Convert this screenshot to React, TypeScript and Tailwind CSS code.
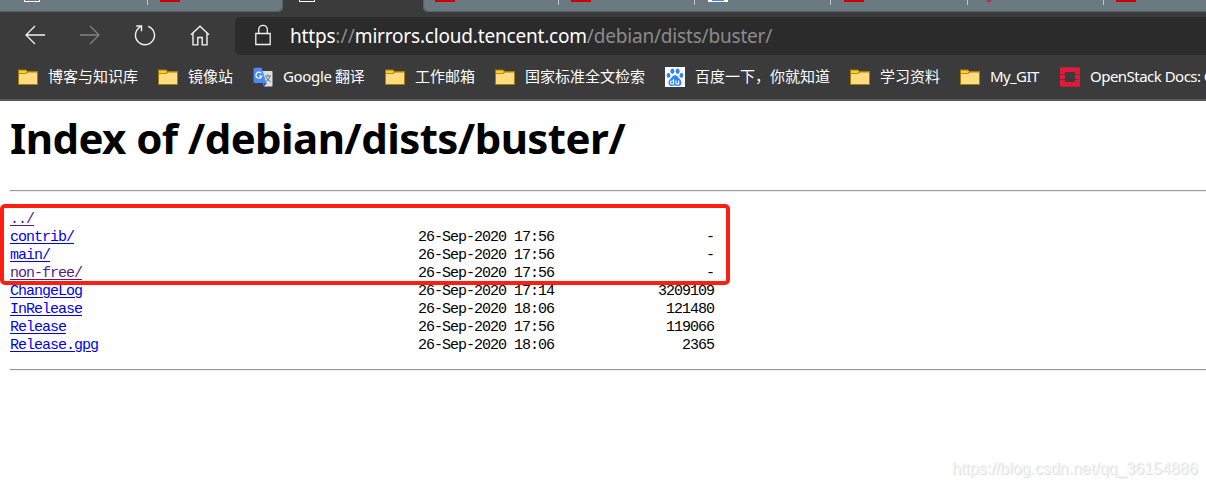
import type { ReactNode } from "react";
import clsx from "clsx";

type IconKind = "folder" | "translate" | "baidu" | "openstack";

interface Bookmark {
  label: string;
  icon: IconKind;
  width: string;
  tracking?: string;
}

interface Entry {
  name: string;
  date?: string;
  size?: string;
  visited?: boolean;
}

const BOOKMARKS: Bookmark[] = [
  { label: "博客与知识库", icon: "folder", width: "w-[140px]" },
  { label: "镜像站", icon: "folder", width: "w-[95px]" },
  { label: "Google 翻译", icon: "translate", width: "w-[132px]", tracking: "tracking-[-0.35px]" },
  { label: "工作邮箱", icon: "folder", width: "w-[110px]" },
  { label: "国家标准全文检索", icon: "folder", width: "w-[170px]" },
  { label: "百度一下，你就知道", icon: "baidu", width: "w-[185px]" },
  { label: "学习资料", icon: "folder", width: "w-[110px]" },
  { label: "My_GIT", icon: "folder", width: "w-[100px]", tracking: "tracking-[-0.6px]" },
  { label: "OpenStack Docs: G", icon: "openstack", width: "w-[180px]", tracking: "tracking-[-0.52px]" },
];

const ENTRIES: Entry[] = [
  { name: "../", visited: true },
  { name: "contrib/", date: "26-Sep-2020 17:56", size: "-" },
  { name: "main/", date: "26-Sep-2020 17:56", size: "-" },
  { name: "non-free/", date: "26-Sep-2020 17:56", size: "-", visited: true },
  { name: "ChangeLog", date: "26-Sep-2020 17:14", size: "3209109" },
  { name: "InRelease", date: "26-Sep-2020 18:06", size: "121480" },
  { name: "Release", date: "26-Sep-2020 17:56", size: "119066" },
  { name: "Release.gpg", date: "26-Sep-2020 18:06", size: "2365" },
];

export default function App() {
  return (
    <div className="relative flex h-[488px] w-[1206px] flex-col overflow-hidden bg-white">
      <TabStrip />
      <Toolbar />
      <BookmarkBar />
      <DirectoryListing />
      <div className="absolute top-[459px] left-[952px] font-['Liberation_Sans',sans-serif] text-[16px] leading-5 whitespace-nowrap text-[#f4f4f4] [text-shadow:1px_1px_0_#e0e0e0]">
        https://blog.csdn.net/qq_36154886
      </div>
    </div>
  );
}

function TabStrip() {
  return (
    <div className="flex h-3 shrink-0 bg-[#3b3b3b]">
      <div className="flex w-[283px] rounded-br-[5px] bg-[#6b7a80] shadow-[inset_-1px_-1px_1px_#536168]">
        <Tab width="w-[148px]" pad="pl-6" divider>
          <PageFavicon />
        </Tab>
        <Tab width="w-[135px]" pad="pl-3">
          <RedFavicon />
        </Tab>
      </div>
      <Tab width="w-[140px]" pad="pl-4">
        <PageFavicon />
      </Tab>
      <div className="flex flex-1 overflow-hidden rounded-bl-[5px] bg-[#6b7a80] shadow-[inset_1px_-1px_1px_#536168]">
        <Tab width="w-[136px]" pad="pl-3" divider>
          <RedFavicon />
        </Tab>
        <Tab width="w-[136px]" pad="pl-3" divider>
          <RedFavicon />
        </Tab>
        <Tab width="w-[136px]" pad="pl-[13px]" divider>
          <div className="flex h-0.5 w-5 justify-center bg-white">
            <div className="h-px w-3 bg-[#3b87ea]" />
          </div>
        </Tab>
        <Tab width="w-[137px]" pad="pl-[13px]" divider>
          <RedFavicon />
        </Tab>
        <Tab width="w-[136px]" pad="pl-[19px]" divider>
          <div className="h-0.5 w-1 skew-x-[30deg] bg-[#b52d55]" />
        </Tab>
        <Tab width="w-[136px]" pad="pl-3">
          <RedFavicon />
        </Tab>
      </div>
    </div>
  );
}

interface TabProps {
  width: string;
  pad: string;
  divider?: boolean;
  children: ReactNode;
}

function Tab({ width, pad, divider, children }: TabProps) {
  return (
    <div className={clsx("flex shrink-0 justify-between", width, pad)}>
      {children}
      {divider && <div className="h-[5px] w-px bg-[#c3cacd]" />}
    </div>
  );
}

function PageFavicon() {
  return <div className="h-0.5 w-4 border-x border-b border-white" />;
}

function RedFavicon() {
  return <div className="h-0.5 w-5 bg-[#cc0000]" />;
}

function Toolbar() {
  return (
    <div className="flex h-[48px] shrink-0 items-start bg-[#3b3b3b] pt-[5px]">
      <div className="flex w-[235px] shrink-0 pt-1.5 pl-6 text-[#f2f2f2]">
        <svg className="mr-[33px]" width="22" height="24" viewBox="0 0 22 24" fill="none" stroke="currentColor" strokeWidth="1.3">
          <path d="M21 12H1.8M11 3L2 12l9 9" />
        </svg>
        <svg className="mr-[32px] text-[#828282]" width="22" height="24" viewBox="0 0 22 24" fill="none" stroke="currentColor" strokeWidth="1.3">
          <path d="M1 12h19.2M11 3l9 9-9 9" />
        </svg>
        <svg className="mr-[33px]" width="24" height="24" viewBox="0 0 24 24" fill="none" stroke="currentColor" strokeWidth="1.4">
          <path d="M15.2 3.3A9.5 9.5 0 1 1 8 3.6" />
          <path d="M3.3 3h5.2v5.2" />
        </svg>
        <svg width="20" height="24" viewBox="0 0 20 24" fill="none" stroke="currentColor" strokeWidth="1.4">
          <path d="M1 11.8L10 3.2l9 8.6M3 10.2v11.7h4.8v-7.4h4.4v7.4H17V10.2" />
        </svg>
      </div>
      <div className="flex h-[38px] flex-1 items-center rounded-l-[5px] bg-[#2b2b2b] pl-5">
        <svg className="mt-[-2px] shrink-0 text-[#f2f2f2]" width="16" height="22" viewBox="0 0 16 22" fill="none" stroke="currentColor" strokeWidth="1.3">
          <path d="M.8 9.500h14.400v11H.8zM3.700 9.500V5.600a4.300 4.300 0 0 1 8.600 0v3.900" />
        </svg>
        <div className="ml-[19px] font-['Noto_Sans',sans-serif] text-[19px] leading-[38px] tracking-[-0.19px] whitespace-nowrap text-[#8b8b8b]">
          <span className="text-white">https</span>
          <span className="tracking-[0.1px]">://</span>
          <span className="text-white">mirrors.cloud.tencent.com</span>
          /debian/dists/buster/
        </div>
      </div>
    </div>
  );
}

function BookmarkBar() {
  return (
    <div className="flex h-[41px] shrink-0 overflow-hidden border-b-2 border-[#595959] bg-[#3b3b3b] pl-[18px]">
      {BOOKMARKS.map((b) => (
        <div key={b.label} className={clsx("flex h-[34px] shrink-0 items-center gap-2.5", b.width)}>
          <BookmarkIcon kind={b.icon} />
          <span
            className={clsx(
              "h-[34px] font-['Noto_Sans','Noto_Sans_CJK_SC',sans-serif] text-[15px] leading-[32px] whitespace-nowrap text-white",
              b.tracking,
            )}
          >
            {b.label}
          </span>
        </div>
      ))}
    </div>
  );
}

function BookmarkIcon({ kind }: { kind: IconKind }) {
  switch (kind) {
    case "folder":
      return (
        <svg className="shrink-0" width="20" height="20" viewBox="0 0 20 20">
          <path d="M0 2.5h8l2 1.5h10v14H0z" fill="#a87b08" />
          <path d="M1 3.5h6.8l1.2 1.2L7.5 6.2H1z" fill="#ffcb32" />
          <path d="M1 7h7l2-1.5h9V17H1z" fill="#ffdc80" />
        </svg>
      );
    case "translate":
      return (
        <svg className="shrink-0" width="20" height="20" viewBox="0 0 20 20">
          <path d="M8 4h10.5q1 0 1 1v13.5q0 1-1 1H11z" fill="#dce0e3" />
          <path d="M10.5 16h3.5l-3 3.5z" fill="#3454c6" />
          <path d="M2 .8h6.5l5 15.2H2q-1.5 0-1.5-1.5V2.3Q.5.8 2 .8" fill="#4c8bf5" />
          <path d="M8.2 6.2A3 3 0 1 0 8.8 9H6" fill="none" stroke="#fff" strokeWidth="1.2" />
          <path d="M12 9h6M15 7.5V9M17 9q-1 4-4 5.5M13 10q1.5 3.5 5 5" fill="none" stroke="#627a85" strokeWidth="1" />
        </svg>
      );
    case "baidu":
      return (
        <svg className="shrink-0" width="20" height="20" viewBox="0 0 20 20">
          <path d="M0 0h20v20H0z" fill="#fff" />
          <g fill="#2f83f7">
            <ellipse cx="7.4" cy="4.2" rx="2" ry="2.7" />
            <ellipse cx="12.6" cy="4.2" rx="2" ry="2.7" />
            <ellipse cx="3.5" cy="8.4" rx="1.9" ry="2.4" />
            <ellipse cx="16.4" cy="8.4" rx="1.9" ry="2.4" />
            <path d="M10 8.3c2.2 0 3.1 2.2 4.7 3.6 3 2.5 2 6.900-1.200 7-1.300 0-2.200-.4-3.500-.4s-2.200.4-3.500.4c-3.200-.1-4.200-4.500-1.200-7C6.900 10.500 7.800 8.300 10 8.300" />
          </g>
          <path d="M8.600 11.800V17H6.900a1.400 1.400 0 0 1 0-3h1.700M11 13.600v2.300q0 1 1 1h1.700v-3.300" fill="none" stroke="#fff" strokeWidth="1.1" />
        </svg>
      );
    case "openstack":
      return (
        <svg className="shrink-0" width="20" height="20" viewBox="0 0 20 20">
          <path
            d="M1.5.3h17Q20 .3 20 1.8V7h-5V5H5v2H0V1.8Q0 .3 1.5.3M0 8h5v4H0zM15 8h5v4h-5zM0 13h5v2h10v-2h5v5.2q0 1.5-1.5 1.5h-17Q0 19.7 0 18.2z"
            fill="#e01b37"
          />
          <path d="M0 7h4v1H0zM16 7h4v1h-4zM0 12h4v1H0zM16 12h4v1h-4z" fill="#a51c31" />
        </svg>
      );
  }
}

function DirectoryListing() {
  return (
    <div className="relative flex-1 pl-2.5 text-black">
      <h1 className="h-[89px] font-['Noto_Sans',sans-serif] text-[42px] leading-[73px] font-bold tracking-[-0.58px] whitespace-nowrap">
        Index of /debian/dists/buster/
      </h1>
      <hr className="h-0.5 border-t border-b border-t-[#9a9a9a] border-b-[#eeeeee]" />
      <div className="h-[177px] pt-[19px] font-['Liberation_Mono',monospace] text-[15px] leading-[18px] tracking-[-1px]">
        {ENTRIES.map((entry) => (
          <div key={entry.name} className="flex h-[18px] whitespace-nowrap">
            <div className="w-[408px]">
              <a
                href="#"
                className={clsx(
                  "underline decoration-1 underline-offset-2",
                  entry.visited ? "text-[#551a8b]" : "text-[#0000ee]",
                )}
              >
                {entry.name}
              </a>
            </div>
            <div className="w-[160px]">{entry.date}</div>
            <div className="w-[136px] text-right">{entry.size}</div>
          </div>
        ))}
      </div>
      <hr className="h-0.5 border-t border-b border-t-[#9a9a9a] border-b-[#eeeeee]" />
      {/* highlight around the directories */}
      <div className="absolute top-[103px] left-0 h-[81px] w-[730px] rounded-[5px] border-4 border-[#ff1e12]" />
    </div>
  );
}
